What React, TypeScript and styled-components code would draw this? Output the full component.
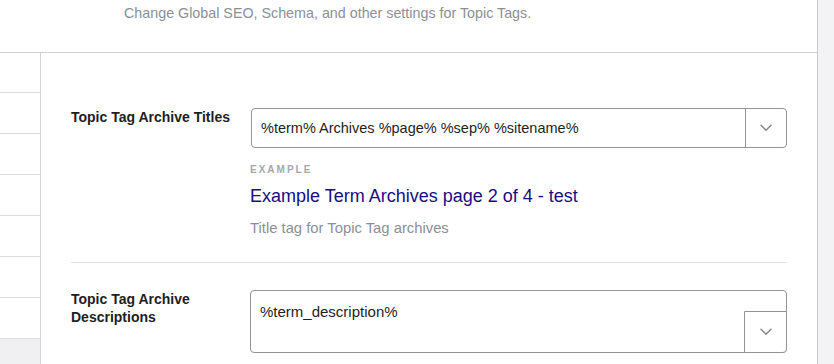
import React from 'react';
import styled, { createGlobalStyle } from 'styled-components';

const GlobalStyle = createGlobalStyle`
  html, body {
    margin: 0;
    padding: 0;
    background: #ffffff;
  }

  body {
    font-family: 'Liberation Sans', Arial, sans-serif;
    color: #1e1e1e;
  }

  * {
    box-sizing: border-box;
  }
`;

const sidebarItems = [0, 1, 2, 3, 4, 5, 6];

function Chevron() {
  return (
    <svg width='12' height='8' viewBox='0 0 12 8' fill='none'>
      <path d='M1 1.2l5 5 5-5' stroke='#84878c' strokeWidth='1.5' strokeLinecap='round' strokeLinejoin='round' />
    </svg>
  );
}

function App() {
  return (
    <>
      <GlobalStyle />
      <Page>
        <Main>
          <Header>
            <HeaderText>Change Global SEO, Schema, and other settings for Topic Tags.</HeaderText>
          </Header>
          <Body>
            <Sidebar>
              {sidebarItems.map((i) => (
                <SidebarItem key={i} />
              ))}
              <SidebarItem $active />
            </Sidebar>
            <Content>
              <Row>
                <Label>Topic Tag Archive Titles</Label>
                <Field>
                  <InputBox>
                    <InputText>%term% Archives %page% %sep% %sitename%</InputText>
                    <DropButton>
                      <Chevron />
                    </DropButton>
                  </InputBox>
                  <ExampleLabel>EXAMPLE</ExampleLabel>
                  <ExampleTitle>Example Term Archives page 2 of 4 - test</ExampleTitle>
                  <HelpText>Title tag for Topic Tag archives</HelpText>
                </Field>
              </Row>
              <Divider />
              <Row $second>
                <Label>
                  Topic Tag Archive
                  <br />
                  Descriptions
                </Label>
                <Field>
                  <TextAreaBox>
                    <TextAreaText>%term_description%</TextAreaText>
                    <CornerButton>
                      <Chevron />
                    </CornerButton>
                  </TextAreaBox>
                </Field>
              </Row>
            </Content>
          </Body>
        </Main>
        <RightStrip />
      </Page>
    </>
  );
}

export default App;

const Page = styled.div`
  display: grid;
  grid-template-columns: 1fr 17px;
  width: 834px;
  height: 364px;
  overflow: hidden;
`;

const Main = styled.div`
  display: flex;
  flex-direction: column;
  min-width: 0;
`;

const Header = styled.div`
  height: 53px;
  border-bottom: 1px solid #cfd0d3;
  padding-left: 124px;
  padding-top: 4px;
`;

const HeaderText = styled.p`
  margin: 0;
  font-size: 14.3px;
  line-height: 18px;
  color: #8c8f94;
`;

const Body = styled.div`
  flex: 1;
  display: flex;
`;

const Sidebar = styled.div`
  width: 41px;
  border-right: 1px solid #d3d4d7;
  display: flex;
  flex-direction: column;
`;

const SidebarItem = styled.div<{ $active?: boolean }>`
  height: 41px;
  flex-shrink: 0;
  border-bottom: 1px solid #dcdcde;
  background: ${({ $active }) => ($active ? '#f0f0f2' : '#ffffff')};

  &:first-child {
    height: 40px;
  }
`;

const Content = styled.div`
  flex: 1;
  padding: 0 30px;
`;

const Row = styled.div<{ $second?: boolean }>`
  display: grid;
  grid-template-columns: 180px 1fr;
  padding-top: ${({ $second }) => ($second ? '27px' : '55px')};
  padding-bottom: ${({ $second }) => ($second ? '0' : '25px')};
`;

const Label = styled.div`
  font-size: 14px;
  font-weight: 700;
  line-height: 18px;
  color: #1e1e1e;
`;

const Field = styled.div`
  display: flex;
  flex-direction: column;
  min-width: 0;
`;

const InputBox = styled.div`
  height: 40px;
  border: 1px solid #949494;
  border-radius: 4px;
  display: flex;
  align-items: stretch;
  overflow: hidden;
`;

const InputText = styled.div`
  flex: 1;
  display: flex;
  align-items: center;
  padding-left: 9px;
  font-size: 14.5px;
  color: #1e1e1e;
`;

const DropButton = styled.div`
  width: 41px;
  border-left: 1px solid #949494;
  display: flex;
  align-items: center;
  justify-content: center;
`;

const ExampleLabel = styled.div`
  margin-top: 16px;
  margin-left: -1px;
  font-size: 10px;
  line-height: 12px;
  font-weight: 700;
  letter-spacing: 2px;
  color: #a7a7ab;
`;

const ExampleTitle = styled.div`
  margin-top: 9px;
  margin-left: -1px;
  font-size: 18px;
  line-height: 22px;
  color: #1a0d7e;
`;

const HelpText = styled.div`
  margin-top: 12px;
  margin-left: -1px;
  font-size: 14.8px;
  line-height: 18px;
  color: #8c8f94;
`;

const Divider = styled.div`
  height: 1px;
  background: #e2e3e5;
`;

const TextAreaBox = styled.div`
  position: relative;
  margin-left: -1px;
  height: 63px;
  border: 1px solid #949494;
  border-radius: 4px;
  padding: 12px 9px;
`;

const TextAreaText = styled.div`
  font-size: 15px;
  line-height: 18px;
  color: #1e1e1e;
`;

const CornerButton = styled.div`
  position: absolute;
  right: -1px;
  bottom: -1px;
  width: 43px;
  height: 42px;
  border: 1px solid #949494;
  border-radius: 0 0 4px 0;
  display: flex;
  align-items: center;
  justify-content: center;
  background: #ffffff;
`;

const RightStrip = styled.div`
  background: #f3f3f6;
  border-left: 1px solid #c8c9cc;
`;
